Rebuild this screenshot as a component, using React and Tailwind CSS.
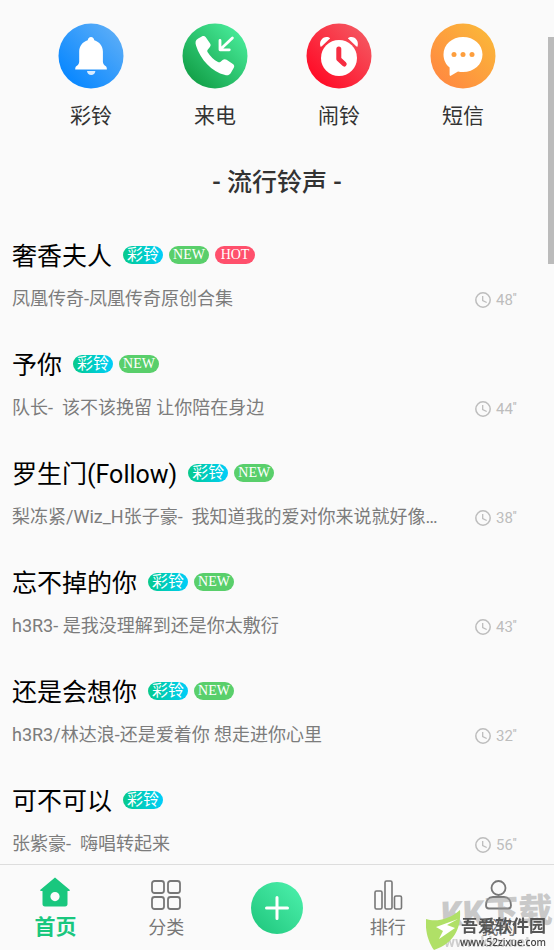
const categories = [
  { label: '彩铃', icon: BellIcon },
  { label: '来电', icon: CallIcon },
  { label: '闹铃', icon: AlarmIcon },
  { label: '短信', icon: MessageIcon },
]
const songs = [
  { title: '奢香夫人', sub: '凤凰传奇-凤凰传奇原创合集', tags: ['彩铃', 'NEW', 'HOT'], time: 48 },
  { title: '予你', sub: '队长-  该不该挽留 让你陪在身边', tags: ['彩铃', 'NEW'], time: 44 },
  { title: '罗生门(Follow)', sub: '梨冻紧/Wiz_H张子豪-  我知道我的爱对你来说就好像…', tags: ['彩铃', 'NEW'], time: 38 },
  { title: '忘不掉的你', sub: 'h3R3- 是我没理解到还是你太敷衍', tags: ['彩铃', 'NEW'], time: 43 },
  { title: '还是会想你', sub: 'h3R3/林达浪-还是爱着你 想走进你心里', tags: ['彩铃', 'NEW'], time: 32 },
  { title: '可不可以', sub: '张紫豪-  嗨唱转起来', tags: ['彩铃'], time: 56 },
]
const tagStyles = {
  彩铃: 'bg-linear-to-r from-[#0bc98b] to-[#00cdfa] text-[16px]',
  NEW: 'bg-[#59cf6b] text-[14px]',
  HOT: 'bg-[#ff506c] text-[14px]',
}

function Disc({ id, from, to, children }) {
  return (
    <svg width="66" height="66" viewBox="0 0 66 66" aria-hidden="true">
      <defs>
        <linearGradient id={id} x1="0.15" y1="0.85" x2="0.85" y2="0.15">
          <stop offset="0" stopColor={from} />
          <stop offset="1" stopColor={to} />
        </linearGradient>
      </defs>
      <circle cx="33" cy="33" r="32.5" fill={`url(#${id})`} />
      {children}
    </svg>
  )
}
function BellIcon() {
  return (
    <Disc id="bell" from="#0a88ff" to="#56abf8">
      <path d="M33 14c1.900 0 3 1.400 3.300 3.300 5.100 1.600 8.600 5.900 8.600 11.300v10.200c0 2 1.200 3.200 2.600 4.200 1 .7 1.400 1.800 1.400 3.400H17.200c0-1.600.4-2.700 1.400-3.400 1.400-1 2.600-2.200 2.600-4.200V28.600c0-5.400 3.400-9.700 8.500-11.300.3-1.900 1.400-3.300 3.300-3.300z" fill="#fff" />
      <path d="M29 48h8.400c-.3 2.500-2 4-4.200 4S29.300 50.500 29 48z" fill="#d9ecff" />
    </Disc>
  )
}
function CallIcon() {
  return (
    <Disc id="call" from="#14a24a" to="#45e795">
      <path d="M16.200 15.600l3.600-2.200c1.500-.8 3-.5 4 .9l4.300 6.300c.9 1.300.6 2.600-.4 3.700l-2 2.400c-.6.8-.5 1.700 0 2.600 2.700 4.200 6.200 7.600 10.300 9.700 1 .5 1.900.3 2.600-.3l2-1.700c1.200-1 2.600-1.200 4-.3l6.300 4.300c1.400 1 1.700 2.300.9 3.700l-2.400 4.200c-1.300 2.500-3.500 3.900-6.200 3.200C29.600 48.500 18.400 36.600 14 22.400c-1-3-.5-5.300 2.200-6.800z" fill="#fff" />
      <path d="M50.400 15L38.200 26.600M38 17.500v9.300h9.300" fill="none" stroke="#fff" strokeWidth="2.800" strokeLinecap="round" strokeLinejoin="round" />
    </Disc>
  )
}
function AlarmIcon() {
  return (
    <Disc id="alarm" from="#ff0d28" to="#f5535d">
      <circle cx="33" cy="35" r="18" fill="#fff" />
      <path d="M14.500 23.500c-1.600-5 1.600-9.600 6-9.600 1.500 0 2.700.5 3.700 1.400l-8.400 8c-.5.500-1 .6-1.300.2zM51.500 23.500c1.600-5-1.600-9.600-6-9.600-1.500 0-2.700.5-3.700 1.400l8.400 8c.5.5 1 .6 1.300.2z" fill="#fff" />
      <path d="M32.800 26v10l5.400 5" fill="none" stroke="#f62d42" strokeWidth="5" strokeLinecap="round" strokeLinejoin="round" />
    </Disc>
  )
}
function MessageIcon() {
  return (
    <Disc id="message" from="#ff8b40" to="#fbb43a">
      <path d="M33 14c11 0 19.500 7.600 19.500 17.500S44 49 33 49c-1.800 0-3.500-.2-5-.6l-6.800 4.200c-1 .6-1.600.2-1.600-.8v-7.200C15.800 41.500 13.500 36.800 13.500 31.500 13.500 21.600 22 14 33 14z" fill="#fff" />
      <circle cx="24" cy="31.500" r="2.500" fill="#fd9e3d" />
      <circle cx="33" cy="31.500" r="2.500" fill="#fd9e3d" />
      <circle cx="42" cy="31.500" r="2.500" fill="#fd9e3d" />
    </Disc>
  )
}
function ClockIcon() {
  return (
    <svg width="16" height="16" viewBox="0 0 16 16" fill="none" stroke="#bdbdbd" aria-hidden="true">
      <circle cx="8" cy="8" r="7.200" strokeWidth="1.500" />
      <path d="M7.700 4v4.500l4 2" strokeWidth="1.300" />
    </svg>
  )
}

function HomeIcon() {
  return (
    <svg width="30" height="30" viewBox="0 0 30 30" aria-hidden="true">
      <path fillRule="evenodd" d="M15 .5l14.600 12.300c.5.500.2 1.200-.5 1.200h-1.600v13c0 1.500-.8 2.500-2.500 2.500H5c-1.700 0-2.500-1-2.500-2.500V14H.9c-.7 0-1-.7-.5-1.200zM15 15a4.600 4.600 0 100 9.200 4.600 4.600 0 000-9.200z" fill="#19c77e" />
    </svg>
  )
}
function GridIcon() {
  return (
    <svg width="30" height="30" viewBox="0 0 30 30" fill="none" stroke="#777" strokeWidth="1.800" aria-hidden="true">
      <rect x="1" y="1" width="12" height="12" rx="2.500" />
      <rect x="17" y="1" width="12" height="12" rx="2.500" />
      <rect x="1" y="17" width="12" height="12" rx="2.500" />
      <rect x="17" y="17" width="12" height="12" rx="2.500" />
    </svg>
  )
}
function RankIcon() {
  return (
    <svg width="30" height="30" viewBox="0 0 30 30" fill="none" stroke="#777" strokeWidth="1.600" aria-hidden="true">
      <rect x="2" y="11" width="7" height="18" rx="1.500" />
      <rect x="12" y="1" width="7" height="28" rx="1.500" />
      <rect x="21.500" y="16" width="7" height="13" rx="1.500" />
    </svg>
  )
}
function UserIcon() {
  return (
    <svg width="30" height="30" viewBox="0 0 30 30" fill="none" stroke="#777" strokeWidth="1.800" aria-hidden="true">
      <circle cx="14.500" cy="8" r="7" />
      <path d="M9 17h11c4.500 0 7 3.500 7 8.500 0 2-1 3-3 3H5c-2 0-3-1-3-3C2 20.500 4.500 17 9 17z" />
    </svg>
  )
}

function Song({ title, sub, tags, time }) {
  return (
    <li>
      <div className="flex items-center gap-[11px] h-9">
        <h2 className="text-[25px] leading-9 text-black">{title}</h2>
        <div className="flex gap-1.5 mb-1">
          {tags.map((t) => (
            <span key={t} className={`flex items-center justify-center w-10 h-[18px] rounded-full leading-none text-white font-['Liberation_Serif','Noto_Sans_CJK_SC',serif] ${tagStyles[t]}`}>{t}</span>
          ))}
        </div>
      </div>
      <div className="mt-2.5 flex items-center justify-between h-7">
        <p className="flex-1 min-w-0 truncate whitespace-pre text-[18px] leading-7 text-[#7c7c7c]">{sub}</p>
        <p className="flex items-center gap-[5px] w-[43px] pt-0.5 text-[15px] leading-6 text-[#bdbdbd]">
          <ClockIcon />
          <span className="flex">{time}<span className="text-[11px] leading-5 font-bold">"</span></span>
        </p>
      </div>
    </li>
  )
}
function Tab({ icon: Icon, label, active }) {
  return (
    <button type="button" className={`flex flex-1 flex-col items-center justify-end ${active ? 'gap-1 pb-[7px] text-[#19c77e] text-[21px] font-bold' : 'gap-0.5 pb-1.5 text-[#777] text-[18px]'}`}>
      <Icon />
      <span className="leading-8">{label}</span>
    </button>
  )
}
function Watermark() {
  return (
    <div className="pointer-events-none absolute bottom-0 right-0 h-14 w-32 whitespace-nowrap">
      <p className="absolute right-0.5 bottom-5 -rotate-2 text-[34px] leading-9 font-black text-[#999]/50">KK下载</p>
      <p className="absolute right-6 bottom-0 text-[15px] leading-4 font-bold text-[#999]/45">www.kkx.net</p>
      <svg className="absolute left-0 bottom-0" width="35" height="40" viewBox="0 0 35 40" aria-hidden="true">
        <path d="M0 9c9 3 23 1 34-9 1 15-3 32-26 40C2 32-1 20 0 9z" fill="#b0e067" />
        <path d="M32 9L10 17l7 4-4 8 16-11-8-3z" fill="#fff" />
      </svg>
      <p className="absolute right-2 bottom-3 text-[17px] leading-6 font-bold text-[#555]">吾爱软件园</p>
      <p className="absolute right-2 bottom-0 text-[10px] leading-4 font-medium font-['Noto_Sans',sans-serif] text-[#444]">www.52zixue.com</p>
    </div>
  )
}
export default function App() {
  return (
    <div className="relative flex flex-col min-h-screen bg-[#fafafa] font-[Roboto,'Noto_Sans_CJK_SC',sans-serif]">
      <div className="absolute right-0 top-[37px] h-[227px] w-1.5 bg-[#bbb]" />
      <main className="flex-1">
        <nav className="grid grid-cols-4 px-[29px] pt-[23px]">
          {categories.map(({ label, icon: Icon }) => (
            <button key={label} type="button" className="flex flex-col items-center gap-[11px] text-[21px] text-[#333]">
              <Icon />
              <span className="leading-8">{label}</span>
            </button>
          ))}
        </nav>
        <h1 className="mt-[33px] text-center text-[25px] leading-9 font-medium text-[#333]">- 流行铃声 -</h1>
        <ul className="mt-[38px] flex flex-col gap-[35px] pl-3 pr-9">
          {songs.map((s) => <Song key={s.title} {...s} />)}
        </ul>
      </main>
      <nav className="sticky bottom-0 flex h-[86px] border-t border-[#ddd] bg-[#fafafa]">
        <Tab icon={HomeIcon} label="首页" active />
        <Tab icon={GridIcon} label="分类" />
        <div className="flex flex-1 items-center justify-center">
          <button type="button" aria-label="添加" className="flex items-center justify-center size-[52px] rounded-full bg-linear-to-tr from-[#1ac57b] to-[#4df2ae]">
            <svg width="24" height="24" viewBox="0 0 24 24" stroke="#fff" strokeWidth="3" strokeLinecap="round" aria-hidden="true"><path d="M12 1.500v21M1.500 12h21" /></svg>
          </button>
        </div>
        <Tab icon={RankIcon} label="排行" />
        <Tab icon={UserIcon} label="我的" />
        <Watermark />
      </nav>
    </div>
  )
}
